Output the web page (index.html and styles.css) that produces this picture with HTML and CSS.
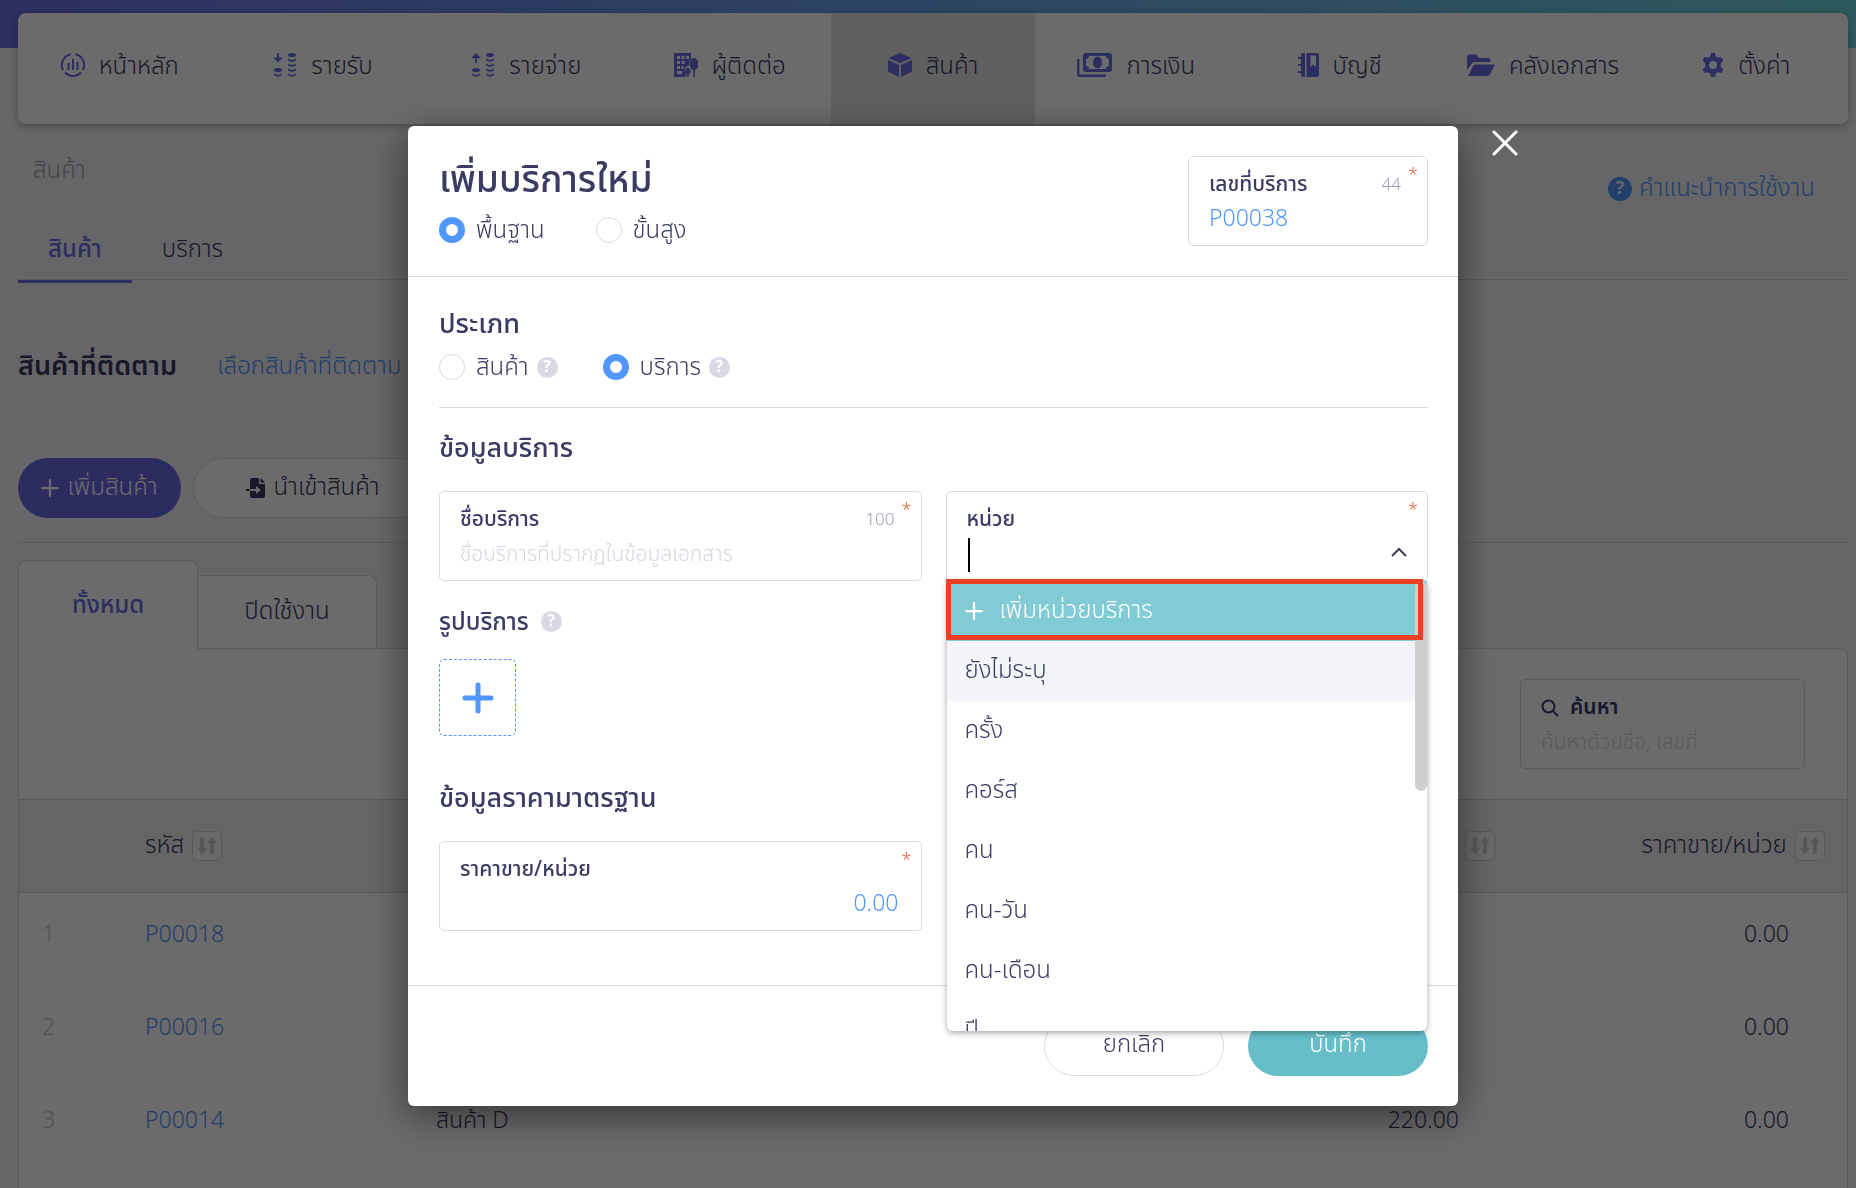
FILE: index.html
```
<!DOCTYPE html>
<html lang="th">
<head>
    <meta charset="UTF-8">
    <meta name="viewport" content="width=device-width, initial-scale=1.0">
    <title>เพิ่มบริการใหม่</title>
    <link rel="stylesheet" href="styles.css">
</head>
<body>
    <!-- icons used more than once -->
    <svg class="defs" aria-hidden="true">
        <symbol id="icon-coins" viewBox="0 0 24 24">
            <ellipse cx="19" cy="2" rx="4" ry="2"/>
            <path d="M15 5.500c2 1.700 6 1.700 8 0v1.500c-1 2.300-7 2.300-8 0zM15 10.500c2 1.700 6 1.700 8 0v1.500c-1 2.300-7 2.300-8 0zM15 15.500c2 1.700 6 1.700 8 0v1.500c-1 2.300-7 2.300-8 0zM15 20.500c2 1.700 6 1.700 8 0v1c-1 2.800-7 2.800-8 0z"/>
            <ellipse cx="5" cy="17" rx="4" ry="2"/>
            <path d="M1 20.500c2 1.700 6 1.700 8 0v1c-1 2.800-7 2.800-8 0z"/>
        </symbol>
        <symbol id="icon-sort" viewBox="0 0 24 20">
            <path d="M5 1h4v11h3l-5 6-5-6h3zM15 18h4V7h3l-5-6-5 6h3z"/>
        </symbol>
        <symbol id="icon-plus" viewBox="0 0 16 16">
            <path d="M8 1v14M1 8h14" fill="none" stroke="currentColor" stroke-width="2" stroke-linecap="round"/>
        </symbol>
    </svg>

    <div class="page">
        <div class="topbar"></div>
        <nav class="nav">
            <a href="#" class="nav-item">
                <svg width="24" height="24" viewBox="0 0 24 24" class="line-icon"><path d="M9.500 1.300A11 11 0 0 0 2 17M14.500 1.300A11 11 0 0 1 22 17M4 19.500a11 11 0 0 0 16 0"/><path d="M7.500 10v7M12 6v11M16.500 9v8"/></svg>
                <span>หน้าหลัก</span>
            </a>
            <a href="#" class="nav-item">
                <svg width="24" height="24"><use href="#icon-coins"/><path d="M4 0h2v4.500h3.800L5 9.500.2 4.500H4z"/></svg>
                <span>รายรับ</span>
            </a>
            <a href="#" class="nav-item">
                <svg width="24" height="24"><use href="#icon-coins"/><path d="M4 9.500h2V5h3.800L5 0 .2 5H4z"/></svg>
                <span>รายจ่าย</span>
            </a>
            <a href="#" class="nav-item">
                <svg width="24" height="24"><path fill-rule="evenodd" d="M0 0h17v6a5 7 0 0 0-2 7 4 4 0 0 0-4 6l1 5H0zM3 3v3h3V3zM7.500 3v3h3V3zM12 3v3h3V3zM3 8v3h3V8zM7.500 8v3h3V8zM3 13v3h3v-3zM7.500 13v3h2v-3zM3 18v3h5v-3z"/><ellipse cx="20" cy="11" rx="4.500" ry="6"/><path d="M19.200 15h1.700v9h-1.700zM13 18h1.500v6H13z"/><ellipse cx="13.700" cy="18.500" rx="2.700" ry="3.500"/></svg>
                <span>ผู้ติดต่อ</span>
            </a>
            <a href="#" class="nav-item active">
                <svg width="24" height="24"><path d="M12 0l11.500 5L12 10 .5 5zM0 7l11 5v12L0 18.500zM24 7l-11 5v12l11-5.500z"/></svg>
                <span>สินค้า</span>
            </a>
            <a href="#" class="nav-item">
                <svg width="35" height="24" viewBox="0 0 35 24"><path fill-rule="evenodd" d="M9 0h23a3 3 0 0 1 3 3v13a3 3 0 0 1-3 3H9a3 3 0 0 1-3-3V3a3 3 0 0 1 3-3zm3 3a3 3 0 0 1-3 3v7a3 3 0 0 1 3 3h17a3 3 0 0 1 3-3V6a3 3 0 0 1-3-3z"/><ellipse cx="20.500" cy="9.500" rx="4.500" ry="6"/><path d="M0 6h2.500v15.500H29V24H3a3 3 0 0 1-3-3z"/></svg>
                <span>การเงิน</span>
            </a>
            <a href="#" class="nav-item">
                <svg width="21" height="24" viewBox="0 0 21 24"><path fill-rule="evenodd" d="M3 2a2 2 0 0 1 2-2h2v24H5a2 2 0 0 1-2-2v-2H0v-2h3v-5H0v-2h3V6H0V4h3zM8.500 0H19a2 2 0 0 1 2 2v20a2 2 0 0 1-2 2H8.500zm4 2.500V14l2.700-2.500L18 14V2.500z"/></svg>
                <span>บัญชี</span>
            </a>
            <a href="#" class="nav-item">
                <svg width="28" height="22" viewBox="0 0 28 22"><path d="M0 16V3a2.500 2.500 0 0 1 2.500-2.500H9L12 4h9a2.500 2.500 0 0 1 2.500 2.500V8H8a4 4 0 0 0-3.500 2zM1 22l5-10a3 3 0 0 1 2.500-1.500H28l-5 10a3 3 0 0 1-2.500 1.500z"/></svg>
                <span>คลังเอกสาร</span>
            </a>
            <a href="#" class="nav-item">
                <svg width="22" height="24" viewBox="0 0 22 24"><path fill-rule="evenodd" d="M9 0h4l.7 3.500 2.300 1.300L19.400 4l2 3.500L18.800 10v4l2.600 2.500-2 3.500-3.400-.8-2.300 1.300L13 24H9l-.7-3.500L6 19.200 2.600 20l-2-3.500L3.200 14v-4L.6 7.500l2-3.500L6 4.800l2.300-1.300zM11 8a4 4 0 1 0 0 8 4 4 0 0 0 0-8z"/></svg>
                <span>ตั้งค่า</span>
            </a>
        </nav>

        <main class="content">
            <div class="title-row">
                <span class="breadcrumb">สินค้า</span>
                <a href="#" class="guide"><span class="guide-icon">?</span>คำแนะนำการใช้งาน</a>
            </div>
            <div class="tabs">
                <a href="#" class="tab active">สินค้า</a>
                <a href="#" class="tab">บริการ</a>
            </div>
            <div class="follow">
                <h2>สินค้าที่ติดตาม</h2>
                <a href="#">เลือกสินค้าที่ติดตาม</a>
            </div>
            <div class="actions">
                <button type="button" class="btn-add"><svg width="18" height="18"><use href="#icon-plus"/></svg>เพิ่มสินค้า</button>
                <button type="button" class="btn-import"><svg width="19" height="20" viewBox="0 0 19 20"><path fill-rule="evenodd" d="M6 0h7v6h6v12a2 2 0 0 1-2 2H6a2 2 0 0 1-2-2v-5H0v-2h4V2a2 2 0 0 1 2-2zm8.500 0L19 4.500h-4.500zM4 11v2h6v3l5-4-5-4v3z"/></svg>นำเข้าสินค้า</button>
            </div>
            <div class="folder-tabs">
                <a href="#" class="folder active">ทั้งหมด</a>
                <a href="#" class="folder">ปิดใช้งาน</a>
            </div>
            <section class="panel">
                <div class="search-row">
                    <div class="search">
                        <label for="search"><svg width="18" height="18" viewBox="0 0 18 18" class="line-icon"><circle cx="7.500" cy="7.500" r="6"/><path d="M12 12l5 5"/></svg>ค้นหา</label>
                        <input type="text" id="search" placeholder="ค้นหาด้วยชื่อ, เลขที่">
                    </div>
                </div>
                <table class="products">
                    <thead>
                        <tr>
                            <th class="col-no"></th>
                            <th class="col-code">รหัส <button type="button" class="sort" aria-label="เรียงรหัส"><svg width="24" height="20"><use href="#icon-sort"/></svg></button></th>
                            <th class="col-name"></th>
                            <th class="col-qty"><button type="button" class="sort" aria-label="เรียงจำนวน"><svg width="24" height="20"><use href="#icon-sort"/></svg></button></th>
                            <th class="col-price">ราคาขาย/หน่วย <button type="button" class="sort" aria-label="เรียงราคา"><svg width="24" height="20"><use href="#icon-sort"/></svg></button></th>
                        </tr>
                    </thead>
                    <tbody>
                        <tr><td class="col-no">1</td><td class="col-code"><a href="#">P00018</a></td><td></td><td class="col-qty"></td><td class="col-price">0.00</td></tr>
                        <tr><td class="col-no">2</td><td class="col-code"><a href="#">P00016</a></td><td></td><td class="col-qty"></td><td class="col-price">0.00</td></tr>
                        <tr><td class="col-no">3</td><td class="col-code"><a href="#">P00014</a></td><td>สินค้า D</td><td class="col-qty">220.00</td><td class="col-price">0.00</td></tr>
                    </tbody>
                </table>
            </section>
        </main>
    </div>

    <div class="overlay">
        <form class="modal" role="dialog" aria-labelledby="modalTitle">
            <button type="button" class="close" aria-label="ปิด"><svg width="26" height="26" viewBox="0 0 26 26"><path d="M2 2l22 22M24 2L2 24" fill="none" stroke="currentColor" stroke-width="3" stroke-linecap="round"/></svg></button>
            <header class="modal-header">
                <div>
                    <h1 id="modalTitle">เพิ่มบริการใหม่</h1>
                    <div class="radios">
                        <label class="radio"><input type="radio" name="mode" checked>พื้นฐาน</label>
                        <label class="radio"><input type="radio" name="mode">ขั้นสูง</label>
                    </div>
                </div>
                <div class="field field-code">
                    <div class="field-top"><label for="code">เลขที่บริการ</label><span class="count">44</span></div>
                    <input type="text" id="code" value="P00038">
                    <span class="required">*</span>
                </div>
            </header>

            <div class="modal-body">
                <section class="type-section">
                    <h2>ประเภท</h2>
                    <div class="radios">
                        <label class="radio"><input type="radio" name="type">สินค้า<span class="help">?</span></label>
                        <label class="radio"><input type="radio" name="type" checked>บริการ<span class="help">?</span></label>
                    </div>
                </section>

                <h2>ข้อมูลบริการ</h2>
                <div class="grid">
                    <div class="field">
                        <div class="field-top"><label for="name">ชื่อบริการ</label><span class="count">100</span></div>
                        <input type="text" id="name" placeholder="ชื่อบริการที่ปรากฏในข้อมูลเอกสาร">
                        <span class="required">*</span>
                    </div>
                    <div class="field">
                        <div class="field-top"><label for="unit">หน่วย</label></div>
                        <input type="text" id="unit" role="combobox" aria-expanded="true" aria-controls="unitList">
                        <span class="caret"></span>
                        <svg class="chevron" width="16" height="10" viewBox="0 0 16 10"><path d="M1 9l7-7 7 7" fill="none" stroke="currentColor" stroke-width="2"/></svg>
                        <span class="required">*</span>
                        <div class="dropdown">
                            <ul id="unitList" role="listbox">
                                <li role="option" class="add"><svg width="18" height="18"><use href="#icon-plus"/></svg>เพิ่มหน่วยบริการ</li>
                                <li role="option" class="hover">ยังไม่ระบุ</li>
                                <li role="option">ครั้ง</li>
                                <li role="option">คอร์ส</li>
                                <li role="option">คน</li>
                                <li role="option">คน-วัน</li>
                                <li role="option">คน-เดือน</li>
                                <li role="option">ปี</li>
                            </ul>
                            <span class="thumb"></span>
                            <span class="highlight"></span>
                        </div>
                    </div>
                </div>

                <div class="image-title"><h3>รูปบริการ</h3><span class="help">?</span></div>
                <button type="button" class="upload" aria-label="เพิ่มรูป"><svg width="32" height="32" viewBox="0 0 32 32"><path d="M16 3v26M3 16h26" fill="none" stroke="currentColor" stroke-width="5" stroke-linecap="round"/></svg></button>

                <h2>ข้อมูลราคามาตรฐาน</h2>
                <div class="grid">
                    <div class="field">
                        <div class="field-top"><label for="price">ราคาขาย/หน่วย</label></div>
                        <input type="text" id="price" class="number" value="0.00">
                        <span class="required">*</span>
                    </div>
                </div>
            </div>

            <footer class="modal-footer">
                <button type="button" class="btn-cancel">ยกเลิก</button>
                <button type="submit" class="btn-save">บันทึก</button>
            </footer>
        </form>
    </div>
</body>
</html>
```

FILE: styles.css
```
* {
    box-sizing: border-box;
}
body {
    margin: 0;
    background: #f4f4f8;
    color: #3b3b64;
    font-family: "Noto Sans Thai", "Noto Sans", sans-serif;
    font-size: 24px;
    font-weight: 350;
    line-height: 32px;
}
a {
    color: #5196fb;
    text-decoration: none;
}
h1, h2, h3 {
    margin: 0;
    font-weight: 500;
}
button, input {
    font: inherit;
    color: inherit;
}
button {
    cursor: pointer;
}
svg {
    flex: none;
    fill: currentColor;
}
.line-icon {
    fill: none;
    stroke: currentColor;
    stroke-width: 2;
}
.defs {
    display: none;
}

/* page */
.page {
    display: flex;
    flex-direction: column;
    height: 100vh;
    padding: 13px 8px 0 18px;
    overflow: hidden;
}
.topbar {
    position: absolute;
    top: 0;
    left: 0;
    right: 0;
    height: 48px;
    background: linear-gradient(90deg, #6c72e8, #6aa5ea 50%, #6fd6df);
}
.nav {
    position: relative;
    display: flex;
    flex: none;
    height: 111px;
    background: #fff;
    border-radius: 8px;
    box-shadow: 0 2px 8px rgba(0, 0, 0, 0.3);
}
.nav-item {
    flex: 1;
    display: flex;
    justify-content: center;
    align-items: center;
    gap: 14px;
    padding-bottom: 7px;
    color: #3b3b64;
    white-space: nowrap;
}
.nav-item span {
    padding-top: 4px;
}
.nav-item svg {
    color: #6c6ce8;
}
.nav-item.active {
    background: #e5e5e5;
}
.content {
    display: flex;
    flex: 1;
    flex-direction: column;
}
.title-row {
    display: flex;
    justify-content: space-between;
    height: 98px;
    padding: 31px 33px 0 15px;
}
.breadcrumb {
    color: #a5a5ab;
}
.guide {
    display: flex;
    align-items: center;
    gap: 7px;
    height: 32px;
    margin-top: 18px;
}
.guide-icon {
    width: 24px;
    height: 24px;
    border-radius: 50%;
    background: #5196fb;
    color: #f4f4f8;
    font-size: 18px;
    font-weight: 700;
    line-height: 24px;
    text-align: center;
}
.tabs {
    display: flex;
    height: 58px;
    border-bottom: 1px solid #d9d9e3;
}
.tab {
    height: 61px;
    padding: 12px 30px 0;
    color: #3b3b64;
}
.tab.active {
    border-bottom: 3px solid #6c6ce8;
    color: #6c6ce8;
    font-weight: 500;
}
.follow {
    display: flex;
    align-items: center;
    gap: 40px;
    height: 178px;
    padding-bottom: 5px;
}
.follow h2 {
    font-size: 27px;
    font-weight: 600;
}
.actions {
    display: flex;
    gap: 12px;
    padding-bottom: 24px;
    border-bottom: 1px solid #d9d9e3;
}
.btn-add, .btn-import {
    display: flex;
    align-items: center;
    justify-content: center;
    gap: 8px;
    height: 60px;
    border-radius: 30px;
}
.btn-add {
    width: 163px;
    border: 0;
    background: #6b69e5;
    color: #fff;
}
.btn-import {
    width: 240px;
    border: 1px solid #dcdce6;
    background: #fff;
}
.folder-tabs {
    display: flex;
    align-items: flex-end;
    margin-top: 17px;
}
.folder {
    width: 179px;
    height: 73px;
    border: 1px solid #d9d9e3;
    border-left: 0;
    border-bottom: 0;
    border-radius: 0 8px 0 0;
    background: #fff;
    color: #3b3b64;
    line-height: 72px;
    text-align: center;
}
.folder.active {
    position: relative;
    width: 180px;
    height: 89px;
    margin-bottom: -1px;
    border-left: 1px solid #d9d9e3;
    border-radius: 8px 8px 0 0;
    color: #6c6ce8;
    font-weight: 500;
    line-height: 90px;
}
.panel {
    flex: 1;
    border: 1px solid #d9d9e3;
    border-bottom: 0;
    border-radius: 0 8px 0 0;
    background: #fff;
}
.search-row {
    display: flex;
    justify-content: flex-end;
    padding: 30px 42px 30px 0;
}
.search {
    width: 285px;
    height: 90px;
    padding: 12px 20px;
    border: 1px solid #d9d9e3;
    border-radius: 5px;
}
.search label {
    display: flex;
    align-items: center;
    gap: 11px;
    font-size: 21px;
    font-weight: 600;
}
.search input {
    width: 100%;
    height: 36px;
    padding: 0;
    border: 0;
    background: none;
    font-size: 21px;
}
.search input::placeholder, .field input::placeholder {
    color: #d6d6e0;
    opacity: 1;
}
.products {
    width: 100%;
    border-collapse: collapse;
    table-layout: fixed;
}
.products th {
    height: 93px;
    padding: 0;
    border-top: 1px solid #d3d3db;
    border-bottom: 1px solid #d3d3db;
    background: #f1f1f1;
    font-weight: 350;
    text-align: left;
}
.products td {
    height: 93px;
    padding: 0 0 8px;
    font-size: 23px;
}
.products .col-no {
    width: 126px;
    padding-left: 23px;
    color: #c6c6cc;
}
.products .col-code {
    width: 291px;
}
.products .col-qty {
    width: 340px;
    text-align: right;
}
.products .col-price {
    width: 330px;
    text-align: right;
}
.products th.col-qty, .products th.col-price {
    padding-right: 22px;
}
.products td.col-qty, .products td.col-price {
    padding-right: 58px;
}
.sort {
    width: 30px;
    height: 30px;
    margin-left: 2px;
    padding: 0;
    border: 1px solid #d3d3db;
    border-radius: 5px;
    background: #fafafa;
    color: #d0d0d6;
    line-height: 0;
    vertical-align: middle;
}

/* modal */
.overlay {
    position: fixed;
    inset: 0;
    display: flex;
    justify-content: center;
    align-items: flex-start;
    padding: 126px 8px 0 18px;
    background: rgba(0, 0, 0, 0.58);
}
.modal {
    position: relative;
    width: 1050px;
    border-radius: 6px;
    background: #fff;
    box-shadow: 0 10px 40px rgba(0, 0, 0, 0.5);
}
.close {
    position: absolute;
    top: 4px;
    right: -60px;
    padding: 0;
    border: 0;
    background: none;
    color: #fff;
    line-height: 0;
}
.modal-header {
    display: flex;
    justify-content: space-between;
    height: 151px;
    padding: 30px 30px 0 31px;
    border-bottom: 1px solid #d9d9e5;
}
.modal h1 {
    font-size: 37px;
    line-height: 50px;
}
.modal h2 {
    font-size: 27px;
    line-height: 38px;
}
.modal h3 {
    padding-top: 3px;
    font-size: 24px;
}
.radios {
    display: flex;
    gap: 45px;
}
.modal-header .radios {
    margin-top: 9px;
    gap: 51px;
}
.radio {
    display: flex;
    align-items: center;
}
.radio input {
    appearance: none;
    width: 26px;
    height: 26px;
    margin: 0 11px 2px 0;
    border: 1px solid #d9d9e5;
    border-radius: 50%;
    background: #fff;
}
.radio input:checked {
    border: 7px solid #5196fb;
}
.help {
    width: 21px;
    height: 21px;
    margin-left: 8px;
    border-radius: 50%;
    background: #d9d9e5;
    color: #fff;
    font-size: 16px;
    font-weight: 700;
    line-height: 21px;
    text-align: center;
}
.radio .help {
    margin-bottom: 2px;
}
.modal-body {
    height: 708px;
    padding: 29px 30px 0 31px;
}
.type-section {
    height: 102px;
    margin-bottom: 22px;
    border-bottom: 1px solid #d9d9e5;
}
.type-section .radios {
    margin-top: 8px;
}
.grid {
    display: grid;
    grid-template-columns: 1fr 1fr;
    gap: 24px;
    margin-top: 23px;
}
.field {
    position: relative;
    height: 90px;
    padding: 12px 20px;
    border: 1px solid #d9d9e5;
    border-radius: 5px;
}
.field-code {
    width: 240px;
}
.field-top {
    display: flex;
    justify-content: space-between;
    padding-right: 6px;
}
.field-top label {
    font-size: 21px;
    font-weight: 500;
}
.count {
    color: #9d9db5;
    font-size: 17px;
}
.field input {
    display: block;
    width: 100%;
    height: 36px;
    padding: 0;
    border: 0;
    outline: 0;
    background: none;
    color: #5196fb;
    font-size: 23px;
}
.field input::placeholder {
    font-size: 21px;
}
.field .number {
    padding-right: 2px;
    text-align: right;
}
.required {
    position: absolute;
    top: 7px;
    right: 9px;
    color: #e8603c;
    font-size: 18px;
    line-height: 24px;
}
.caret {
    position: absolute;
    top: 46px;
    left: 21px;
    width: 2px;
    height: 34px;
    background: #000;
}
.chevron {
    position: absolute;
    top: 55px;
    right: 20px;
}
.dropdown {
    position: absolute;
    top: 89px;
    left: 0;
    right: 0;
    z-index: 1;
}
.dropdown ul {
    height: 450px;
    margin: 0;
    padding: 0;
    overflow: hidden;
    border-radius: 0 0 6px 6px;
    background: #fff;
    box-shadow: 0 2px 6px rgba(0, 0, 0, 0.35);
    list-style: none;
}
.dropdown li {
    display: flex;
    align-items: center;
    height: 60px;
    padding: 0 18px 1px;
}
.dropdown .add {
    gap: 17px;
    background: #80cbd4;
    color: #fff;
}
.dropdown .hover {
    background: #f4f5f8;
}
.thumb {
    position: absolute;
    top: 0;
    right: 0;
    width: 12px;
    height: 210px;
    border-radius: 6px;
    background: #cfcfcf;
}
.highlight {
    position: absolute;
    top: -2px;
    left: -1px;
    right: 4px;
    height: 61px;
    border: 5px solid #ea4025;
}
.image-title {
    display: flex;
    align-items: center;
    gap: 4px;
    margin-top: 23px;
}
.upload {
    width: 77px;
    height: 77px;
    margin: 20px 0 44px;
    padding: 0;
    border: 1px dashed #5196fb;
    border-radius: 5px;
    background: none;
    color: #5196fb;
    line-height: 0;
}
.modal-footer {
    display: flex;
    justify-content: flex-end;
    gap: 24px;
    padding: 30px;
    border-top: 1px solid #d9d9e5;
}
.modal-footer button {
    width: 180px;
    height: 60px;
    padding-bottom: 3px;
    border: 1px solid #d9d9e5;
    border-radius: 30px;
    background: #fff;
}
.modal-footer .btn-save {
    border: 0;
    background: #66bec9;
    color: #fff;
}
```
